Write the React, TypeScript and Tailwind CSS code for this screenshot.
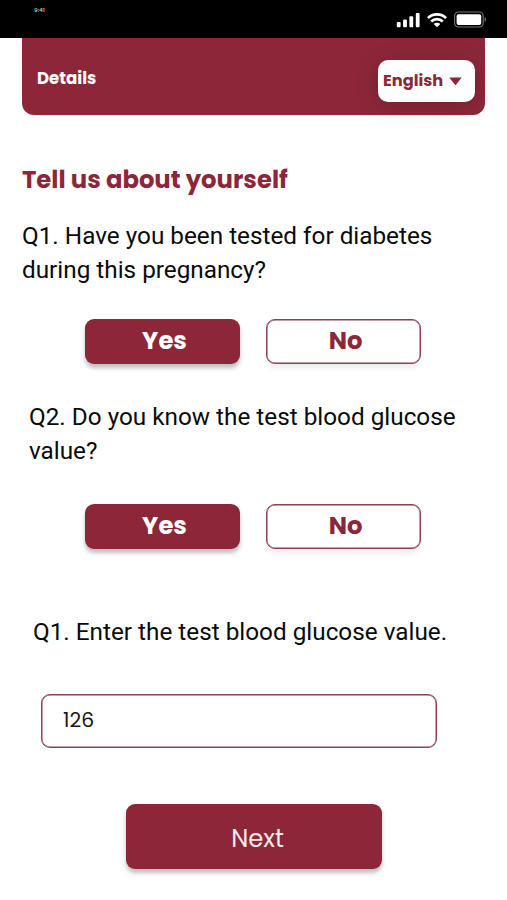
import { useState } from 'react';

type Answer = 'yes' | 'no';

interface ChoiceProps {
    value: Answer;
    onChange: (value: Answer) => void;
}

function StatusBar() {
    return (
        <div className="flex h-[38px] justify-between bg-black text-white">
            <span className="ml-[34px] mt-[7px] h-2 text-[5.8px] leading-[7px] font-medium text-neutral-300">9:41</span>
            <div className="mr-[20px] mt-[11px] flex h-[17px] items-center">
                {/* Signal */}
                <svg width="24" height="16" viewBox="0 0 24 16" fill="currentColor">
                    <rect x="0.8" y="10" width="3.8" height="5.3" rx="1" />
                    <rect x="7.1" y="7.5" width="3.8" height="7.8" rx="1" />
                    <rect x="13.4" y="4.3" width="3.8" height="11" rx="1" />
                    <rect x="19.8" y="1" width="3.8" height="14.3" rx="1" />
                </svg>
                {/* Wifi */}
                <svg className="ml-[7px]" width="20" height="16" viewBox="0 0 21 16">
                    <g fill="none" stroke="currentColor" strokeWidth="2.8">
                        <path d="M1 6 C6.2 0.9 14.8 0.9 20 6" />
                        <path d="M4.4 9.5 C7.8 6.2 13.2 6.2 16.6 9.5" />
                    </g>
                    <path d="M7 12.2 C9 10.4 12 10.4 14 12.2 L10.5 15.6 Z" fill="currentColor" />
                </svg>
                {/* Battery */}
                <svg className="ml-[6px]" width="34" height="17" viewBox="0 0 34 17">
                    <rect x="1.6" y="1" width="28.6" height="15" rx="4" fill="none" stroke="#777" strokeWidth="1.1" />
                    <rect x="3.6" y="3.2" width="24.6" height="10.8" rx="2" fill="currentColor" />
                    <path d="M31.7 6 C33.6 7 33.6 10 31.7 11 Z" fill="#777" />
                </svg>
            </div>
        </div>
    );
}

function Choice({ value, onChange }: ChoiceProps) {
    const base = 'h-[45px] w-[155px] rounded-[9px] text-[24.3px] font-bold';
    const selected = 'bg-[#8c2739] text-white shadow-[0_4px_4px_rgba(0,0,0,0.25)]';
    const outlined = 'border border-[#8c4053] bg-white text-[#8c2739] shadow-[inset_0_0_0_0.5px_#8c4053,0_5px_4px_rgba(0,0,0,0.06)]';

    return (
        <div className="ml-[85px] flex gap-[26px]">
            <button onClick={() => onChange('yes')} className={`${base} pb-px ${value === 'yes' ? selected : outlined}`}>
                <span className="inline-block translate-x-[2px]">Yes</span>
            </button>
            <button onClick={() => onChange('no')} className={`${base} pb-px ${value === 'no' ? selected : outlined}`}>
                <span className="inline-block translate-x-[2px]">No</span>
            </button>
        </div>
    );
}

export default function App() {
    const [tested, setTested] = useState<Answer>('yes');
    const [known, setKnown] = useState<Answer>('yes');
    const [glucose, setGlucose] = useState('126');

    return (
        <div className="h-[900px] w-[507px] overflow-hidden bg-white font-[Poppins,Inter,sans-serif]">
            <StatusBar />

            {/* Header */}
            <header className="mx-[22px] flex h-[77px] items-start justify-between rounded-b-[12px] bg-[#8c2739] pr-[10px] pl-[15px]">
                <h1 className="mt-[29px] text-[16.6px] leading-6 font-bold text-white">Details</h1>
                <button className="mt-[22px] flex h-[42px] w-[97px] items-center rounded-[10px] bg-white pl-[5px] text-[16.2px] font-bold text-[#8c2739] shadow-[0_4px_24px_rgba(0,0,0,0.16)]">
                    English
                    <svg className="mt-px ml-[6px]" width="13" height="9" viewBox="0 0 13 9" fill="currentColor">
                        <path d="M0.3 0.5 H12.7 L7 7.8 Q6.5 8.4 6 7.8 Z" />
                    </svg>
                </button>
            </header>

            <main>
                <h2 className="mt-[49px] ml-[22px] text-[24.3px] leading-8 font-bold text-[#8c2739]">Tell us about yourself</h2>

                <p className="mt-[23px] ml-[22px] w-[440px] font-[Roboto,sans-serif] text-[24.3px] leading-[34px] text-neutral-950">
                    Q1. Have you been tested for diabetes during this pregnancy?
                </p>
                <div className="mt-[32px]">
                    <Choice value={tested} onChange={setTested} />
                </div>

                <p className="mt-[36px] ml-[29px] w-[450px] font-[Roboto,sans-serif] text-[24.3px] leading-[34px] text-neutral-950">
                    Q2. Do you know the test blood glucose value?
                </p>
                <div className="mt-[36px]">
                    <Choice value={known} onChange={setKnown} />
                </div>

                <p className="mt-[66px] ml-[33px] font-[Roboto,sans-serif] text-[24.3px] leading-[34px] text-neutral-950">
                    Q1. Enter the test blood glucose value.
                </p>
                <input
                    value={glucose}
                    onChange={e => setGlucose(e.target.value)}
                    className="mt-[45px] ml-[41px] block h-[54px] w-[396px] rounded-[9px] border border-[#8c4053] bg-white px-[21px] pb-[3px] text-[20.3px] text-neutral-900 shadow-[inset_0_0_0_0.5px_#8c4053] outline-none"
                />

                <button className="mt-[56px] ml-[126px] block h-[65px] w-[256px] rounded-[9px] bg-[#8c2739] pt-[5px] pl-[7px] text-[24.3px] text-[#fbe9e7] shadow-[0_4px_4px_rgba(0,0,0,0.25)]">
                    Next
                </button>
            </main>
        </div>
    );
}
